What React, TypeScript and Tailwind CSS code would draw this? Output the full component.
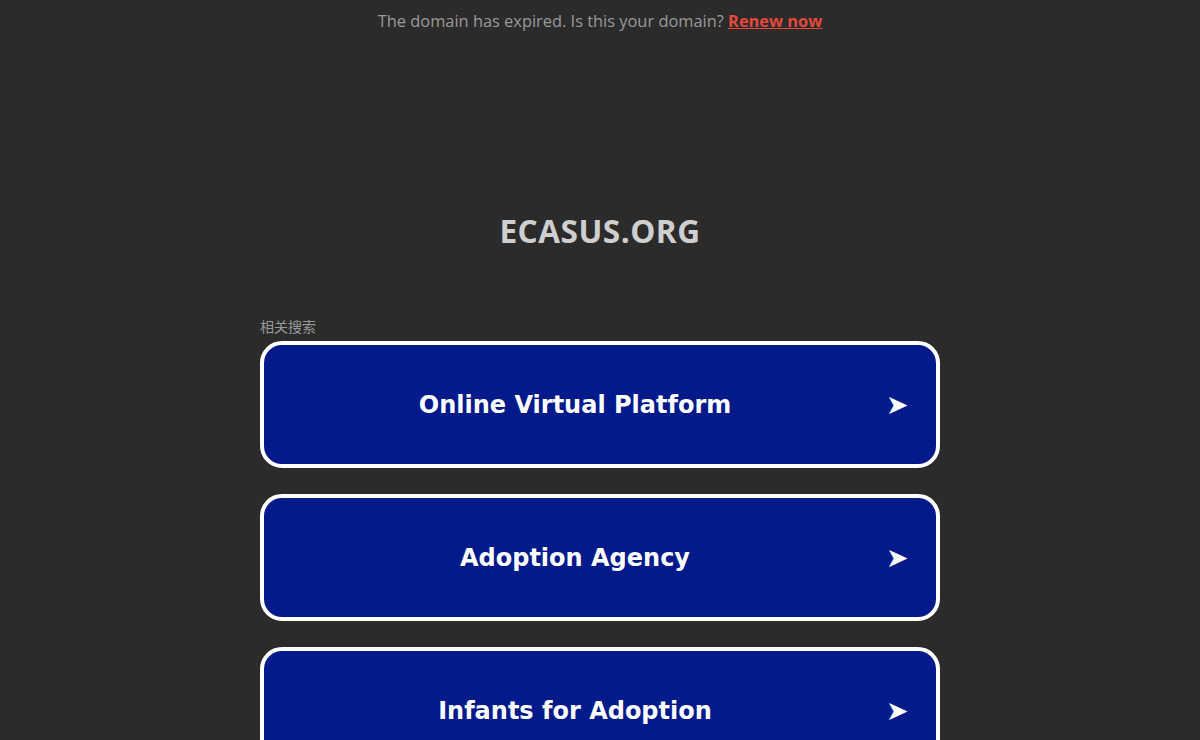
const links = ["Online Virtual Platform", "Adoption Agency", "Infants for Adoption"];

export default function App() {
  return (
    <div className="min-h-screen bg-[#2b2b2b] overflow-hidden font-['Open_Sans','Noto_Sans',sans-serif]">
      {/* expired banner */}
      <div className="pt-[9px] text-center text-[16.4px] leading-[24px] text-[#9a9a9a]">
        The domain has expired. Is this your domain?{" "}
        <a href="#" className="font-bold text-[#e5493a] underline">
          Renew now
        </a>
      </div>

      <h1 className="mt-[178px] text-center text-[31.6px] leading-[40px] font-bold text-[#cfcfcf] tracking-[0.5px]">
        ECASUS.ORG
      </h1>

      <div className="mx-auto mt-[66px] w-[680px]">
        <p className="text-[14px] leading-[18px] text-[#9a9a9a] font-['Noto_Sans_CJK_SC',sans-serif]">
          相关搜索
        </p>
        <div className="mt-[6px] flex flex-col gap-[26px]">
          {links.map((label) => (
            <a
              key={label}
              href="#"
              className="flex h-[127px] items-center rounded-[22px] border-[4px] border-white bg-[#021a8a] pr-[30px] text-white"
            >
              <span className="flex-1 text-center text-[24px] font-bold font-['DejaVu_Sans','Verdana',sans-serif]">
                {label}
              </span>
              <span className="w-[20px] text-[27px] leading-none font-['DejaVu_Sans',sans-serif]">➤</span>
            </a>
          ))}
        </div>
      </div>
    </div>
  );
}
